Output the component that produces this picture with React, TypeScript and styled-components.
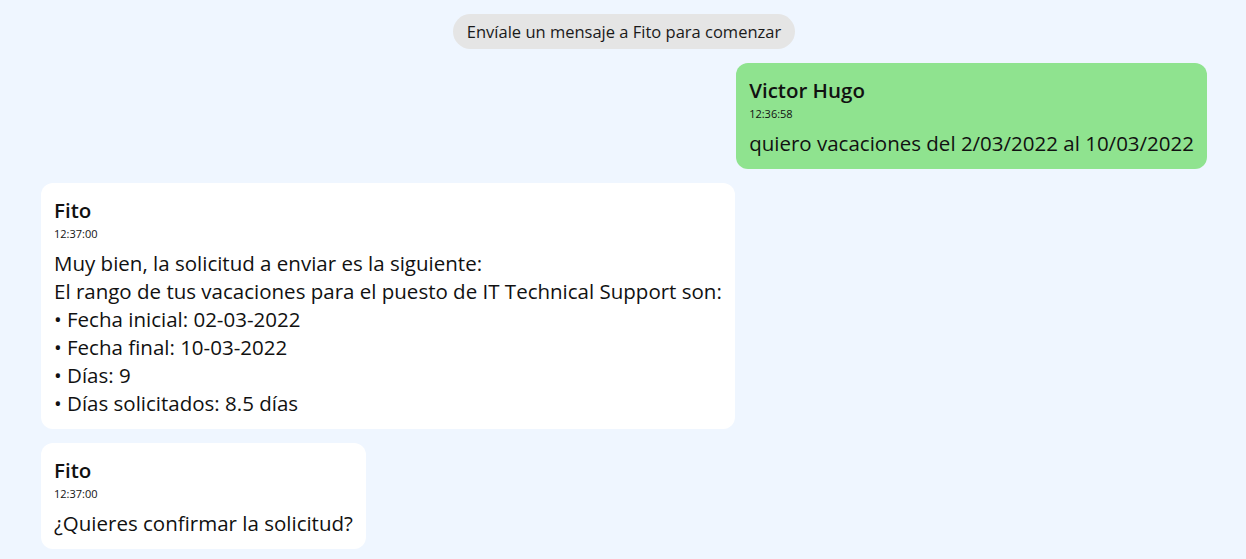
import React from "react";
import styled, { createGlobalStyle } from "styled-components";

interface Message {
  author: string;
  time: string;
  text: string;
  mine?: boolean;
}

const messages: Message[] = [
  {
    author: "Victor Hugo",
    time: "12:36:58",
    text: "quiero vacaciones del 2/03/2022 al 10/03/2022",
    mine: true,
  },
  {
    author: "Fito",
    time: "12:37:00",
    text: [
      "Muy bien, la solicitud a enviar es la siguiente:",
      "El rango de tus vacaciones para el puesto de IT Technical Support son:",
      "• Fecha inicial: 02-03-2022",
      "• Fecha final: 10-03-2022",
      "• Días: 9",
      "• Días solicitados: 8.5 días",
    ].join("\n"),
  },
  {
    author: "Fito",
    time: "12:37:00",
    text: "¿Quieres confirmar la solicitud?",
  },
];

const GlobalStyle = createGlobalStyle`
  html, body {
    margin: 0;
    background: #eff6ff;
    font-family: "Open Sans", "Noto Sans", sans-serif;
    color: #111;
  }
`;

const ChatWindow = styled.div`
  display: flex;
  flex-direction: column;
  gap: 14px;
  padding: 14px 39px 12px 41px;
  min-height: 100vh;
  box-sizing: border-box;
`;

const Notice = styled.div`
  align-self: center;
  background: #e5e5e5;
  border-radius: 18px;
  padding: 7px 14px;
  font-size: 16.5px;
  line-height: 21px;
  color: #1a1a1a;
`;

const Bubble = styled.div<{ $mine?: boolean }>`
  align-self: ${({ $mine }) => ($mine ? "flex-end" : "flex-start")};
  background: ${({ $mine }) => ($mine ? "#8fe38f" : "#ffffff")};
  border-radius: 12px;
  padding: 13px 13px 12px;
  display: flex;
  flex-direction: column;
`;

const Author = styled.div`
  font-size: 20.5px;
  font-weight: 600;
  line-height: 28px;
`;

const Time = styled.div`
  font-size: 11px;
  line-height: 15px;
  margin: 2px 0 8px;
`;

const Text = styled.div`
  font-size: 20.5px;
  line-height: 28px;
  white-space: pre-line;
`;

export default function App() {
  return (
    <>
      <GlobalStyle />
      <ChatWindow>
        <Notice>Envíale un mensaje a Fito para comenzar</Notice>
        {messages.map((m, i) => (
          <Bubble key={i} $mine={m.mine}>
            <Author>{m.author}</Author>
            <Time>{m.time}</Time>
            <Text>{m.text}</Text>
          </Bubble>
        ))}
      </ChatWindow>
    </>
  );
}
